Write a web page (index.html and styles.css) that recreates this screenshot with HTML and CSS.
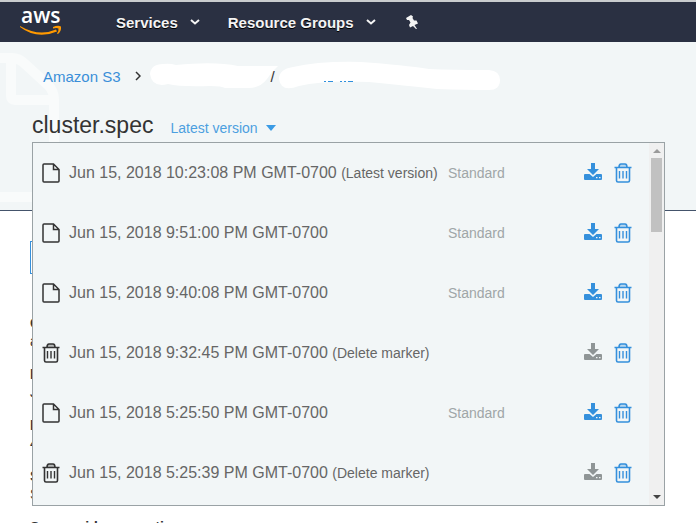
FILE: index.html
```html
<!DOCTYPE html>
<html lang="en">
<head>
    <meta charset="UTF-8">
    <meta name="viewport" content="width=device-width, initial-scale=1.0">
    <title>cluster.spec - S3 Management Console</title>
    <link rel="stylesheet" href="styles.css">
</head>
<body>
    <!-- shared icons -->
    <svg class="sprite" aria-hidden="true">
        <symbol id="file" viewBox="0 0 18 20">
            <path d="M2 1H11.5L17 6.5V18Q17 19 16 19H2Q1 19 1 18V2Q1 1 2 1ZM11.5 1V6.5H17" fill="none" stroke="currentColor" stroke-width="1.5"/>
        </symbol>
        <symbol id="trash" viewBox="0 0 18 20">
            <path d="M5 4Q5 1 7 1H11Q13 1 13 4Z" fill="currentColor" fill-opacity="0.3"/>
            <path d="M0.5 4.5H17.5M5 4.5Q5 1 7 1H11Q13 1 13 4.5M2.5 4.5V17.5Q2.5 19 4 19H14Q15.5 19 15.5 17.5V4.5" fill="none" stroke="currentColor" stroke-width="1.6"/>
            <path d="M5.5 8V15.5M9 8V15.5M12.5 8V15.5" fill="none" stroke="currentColor" stroke-width="1.4"/>
        </symbol>
        <symbol id="download" viewBox="0 0 18 20">
            <path d="M7 0H11V6H15L9 12L3 6H7Z" fill="currentColor"/>
            <path d="M0 12Q0 11 1 11H5.5L9 14L12.5 11H17Q18 11 18 12V16Q18 17 17 17H1Q0 17 0 16ZM12 14V15.2H13.5V14ZM15 14V15.2H16.500V14Z" fill="currentColor" fill-rule="evenodd"/>
        </symbol>
    </svg>

    <nav class="topbar">
        <a class="logo" href="#" aria-label="aws">
            <svg width="44" height="28" viewBox="0 0 44 28">
                <text x="1" y="15" class="logo-text">aws</text>
                <path d="M0 18Q19 29 36 21.500L37 23.500Q17 32 0 19Z" fill="#f90"/>
                <path d="M33 19Q38 17 41 18.500Q41.500 23 38 26L37 25.500Q39 22 38.500 20.500Q37 19.500 33 20.500Z" fill="#f90"/>
            </svg>
        </a>
        <button class="nav-item">Services
            <svg width="10" height="6" viewBox="0 0 10 6"><path d="M1 1L5 4.500L9 1" fill="none" stroke="currentColor" stroke-width="2"/></svg>
        </button>
        <button class="nav-item">Resource Groups
            <svg width="10" height="6" viewBox="0 0 10 6"><path d="M1 1L5 4.500L9 1" fill="none" stroke="currentColor" stroke-width="2"/></svg>
        </button>
        <button class="nav-item" aria-label="Pin">
            <svg width="16" height="14" viewBox="0 0 16 14"><path d="M2 3L7 0L9 1.500L8.500 3L10 5.500L12.500 5.500L14 8.500L10.500 10L13 14H12L9 11L6 12.500L5 10L6.500 7.500L5 5L3 5Z" fill="currentColor"/></svg>
        </button>
    </nav>

    <header class="object-header">
        <svg class="watermark" width="60" height="150" viewBox="0 0 60 150" aria-hidden="true">
            <path d="M-80 6H12Q19 6 25 12L48 33Q54 39 54 48V145H-80M11 6V44Q11 48 15 48H54" fill="none" stroke="#f9fbfb" stroke-width="10"/>
        </svg>
        <div class="breadcrumb">
            <a href="#">Amazon S3</a>
            <svg class="chevron" width="6" height="10" viewBox="0 0 6 10"><path d="M1 1L5 5L1 9" fill="none" stroke="#333" stroke-width="1.500"/></svg>
            <svg class="bucket" width="128" height="30" viewBox="0 0 128 30"><path d="M0 13Q1 3 13 3Q20 2 26 4Q65 0 88 5H128Q122 10 117 18Q110 27 99 27H75Q72 25 60 25Q30 26 18 23Q2 27 0 13Z" fill="#fff"/></svg>
            <span class="slash">/</span>
            <svg class="folder" width="222" height="30" viewBox="0 0 222 30">
                <path d="M0 18Q0 8 14 6Q40 0 82 1Q125 4 150 8Q172 9 210 9Q221 10 221 19Q221 29 210 29Q190 29 158 28Q120 24 90 21Q45 19 20 25Q2 32 0 18Z" fill="#fff"/>
                <path d="M45 20.500H81" stroke="#2f8fdc" stroke-dasharray="2 2 5 7 2 2" fill="none"/>
            </svg>
        </div>
        <div class="title-row">
            <h1>cluster.spec</h1>
            <button class="version-toggle" aria-expanded="true">Latest version <span class="caret"></span></button>
            <div class="version-menu">
                <ul class="versions">
                    <li>
                        <svg class="icon"><use href="#file"/></svg>
                        <span class="date">Jun 15, 2018 10:23:08 PM GMT-0700 <small>(Latest version)</small></span>
                        <span class="storage">Standard</span>
                        <button aria-label="Download"><svg class="icon"><use href="#download"/></svg></button>
                        <button aria-label="Delete"><svg class="icon"><use href="#trash"/></svg></button>
                    </li>
                    <li>
                        <svg class="icon"><use href="#file"/></svg>
                        <span class="date">Jun 15, 2018 9:51:00 PM GMT-0700</span>
                        <span class="storage">Standard</span>
                        <button aria-label="Download"><svg class="icon"><use href="#download"/></svg></button>
                        <button aria-label="Delete"><svg class="icon"><use href="#trash"/></svg></button>
                    </li>
                    <li>
                        <svg class="icon"><use href="#file"/></svg>
                        <span class="date">Jun 15, 2018 9:40:08 PM GMT-0700</span>
                        <span class="storage">Standard</span>
                        <button aria-label="Download"><svg class="icon"><use href="#download"/></svg></button>
                        <button aria-label="Delete"><svg class="icon"><use href="#trash"/></svg></button>
                    </li>
                    <li>
                        <svg class="icon"><use href="#trash"/></svg>
                        <span class="date">Jun 15, 2018 9:32:45 PM GMT-0700 <small>(Delete marker)</small></span>
                        <span class="storage"></span>
                        <button aria-label="Download" disabled><svg class="icon"><use href="#download"/></svg></button>
                        <button aria-label="Delete"><svg class="icon"><use href="#trash"/></svg></button>
                    </li>
                    <li>
                        <svg class="icon"><use href="#file"/></svg>
                        <span class="date">Jun 15, 2018 5:25:50 PM GMT-0700</span>
                        <span class="storage">Standard</span>
                        <button aria-label="Download"><svg class="icon"><use href="#download"/></svg></button>
                        <button aria-label="Delete"><svg class="icon"><use href="#trash"/></svg></button>
                    </li>
                    <li>
                        <svg class="icon"><use href="#trash"/></svg>
                        <span class="date">Jun 15, 2018 5:25:39 PM GMT-0700 <small>(Delete marker)</small></span>
                        <span class="storage"></span>
                        <button aria-label="Download" disabled><svg class="icon"><use href="#download"/></svg></button>
                        <button aria-label="Delete"><svg class="icon"><use href="#trash"/></svg></button>
                    </li>
                </ul>
                <div class="scrollbar">
                    <span class="arrow up"></span>
                    <span class="thumb"></span>
                    <span class="arrow down"></span>
                </div>
            </div>
        </div>
    </header>

    <main>
        <button class="open-button">Open</button>
        <dl>
            <dt>Owner</dt>
            <dd>a</dd>
            <dt>Last modified</dt>
            <dd>Jun 15, 2018</dd>
            <dt>Etag</dt>
            <dd>4</dd>
            <dt>Storage class</dt>
            <dd>Standard</dd>
            <dt>Server side encryption</dt>
        </dl>
    </main>
</body>
</html>
```
FILE: styles.css
```css
* {
    box-sizing: border-box;
}

body {
    margin: 0;
    height: 100vh;
    overflow: hidden;
    font-family: "Liberation Sans", Arial, sans-serif;
    font-size: 14px;
    color: #333;
    background-color: #fff;
}

button {
    padding: 0;
    border: 0;
    background: none;
    font: inherit;
    color: inherit;
    cursor: pointer;
}

a {
    color: #3a8fd9;
    text-decoration: none;
}

svg {
    display: block;
    flex: none;
}

.sprite {
    display: none;
}

.topbar {
    display: flex;
    align-items: center;
    height: 42px;
    padding-left: 20px;
    border-top: 2px solid #c9ccce;
    background-color: #2a3042;
    color: #f4f4f4;
}

.logo {
    width: 96px;
}

.logo-text {
    font-family: "Open Sans", sans-serif;
    font-size: 21px;
    font-weight: 600;
    fill: #fff;
}

.nav-item {
    display: flex;
    align-items: center;
    gap: 12px;
    margin-right: 28px;
    font-size: 15px;
    font-weight: bold;
    text-shadow: 0 1px 0 #000;
}

.object-header {
    position: relative;
    height: 169px;
    padding: 18px 31px 0 32px;
    border-bottom: 1px solid #44546b;
    background-color: #f2f6f7;
}

.watermark {
    position: absolute;
    left: 0;
    top: 10px;
}

.breadcrumb {
    position: relative;
    display: flex;
    align-items: center;
    height: 32px;
    padding-left: 11px;
    font-size: 15px;
}

.chevron {
    margin: 0 9px 0 14px;
}

.bucket {
    margin-right: -7px;
}

.slash {
    position: relative;
    margin-right: 4px;
}

.title-row {
    position: relative;
    display: flex;
    align-items: baseline;
    gap: 17px;
    height: 50px;
    padding-top: 18px;
}

h1 {
    margin: 0;
    font-size: 23px;
    line-height: 30px;
    font-weight: normal;
}

.version-toggle {
    display: flex;
    align-items: center;
    gap: 8px;
    color: #4c9fe0;
}

.caret {
    border: 5px solid transparent;
    border-top: 6px solid #3b9be5;
    border-bottom: 0;
}

.version-menu {
    position: absolute;
    top: 50px;
    left: 0;
    right: 0;
    display: flex;
    border: 1px solid #9aa2a5;
    background-color: #f2f6f7;
}

.versions {
    flex: 1;
    min-width: 0;
    margin: 0;
    padding: 0 17px 2px 9px;
    list-style: none;
}

.versions li {
    display: grid;
    grid-template-columns: 18px minmax(0, 1fr) 124px 18px 18px;
    column-gap: 12px;
    align-items: center;
    height: 60px;
    font-size: 16px;
}

.icon {
    width: 18px;
    height: 20px;
}

.date {
    margin-left: -3px;
    color: #666;
    white-space: nowrap;
}

.date small {
    font-size: 14px;
}

.storage {
    font-size: 14px;
    color: #a0a6a8;
}

.versions button {
    color: #3590dc;
}

.versions button:disabled {
    color: #8f9596;
}

.scrollbar {
    display: flex;
    flex: none;
    flex-direction: column;
    align-items: center;
    width: 15px;
    padding: 6px 0;
    background-color: #f0f0f0;
}

.thumb {
    width: 11px;
    height: 74px;
    margin-top: 5px;
    background-color: #c1c1c1;
}

.arrow {
    border: 4px solid transparent;
}

.arrow.up {
    border-top: 0;
    border-bottom-color: #9a9a9a;
}

.arrow.down {
    margin-top: auto;
    border-bottom: 0;
    border-top-color: #444;
}

main {
    padding: 30px;
}

.open-button {
    width: 80px;
    height: 33px;
    border: 1px solid #3590dc;
    color: #3590dc;
}

dl {
    margin: 40px 0 0;
    line-height: 18px;
}

dt {
    font-weight: bold;
}

dd {
    margin: 0 0 15px;
}
```
